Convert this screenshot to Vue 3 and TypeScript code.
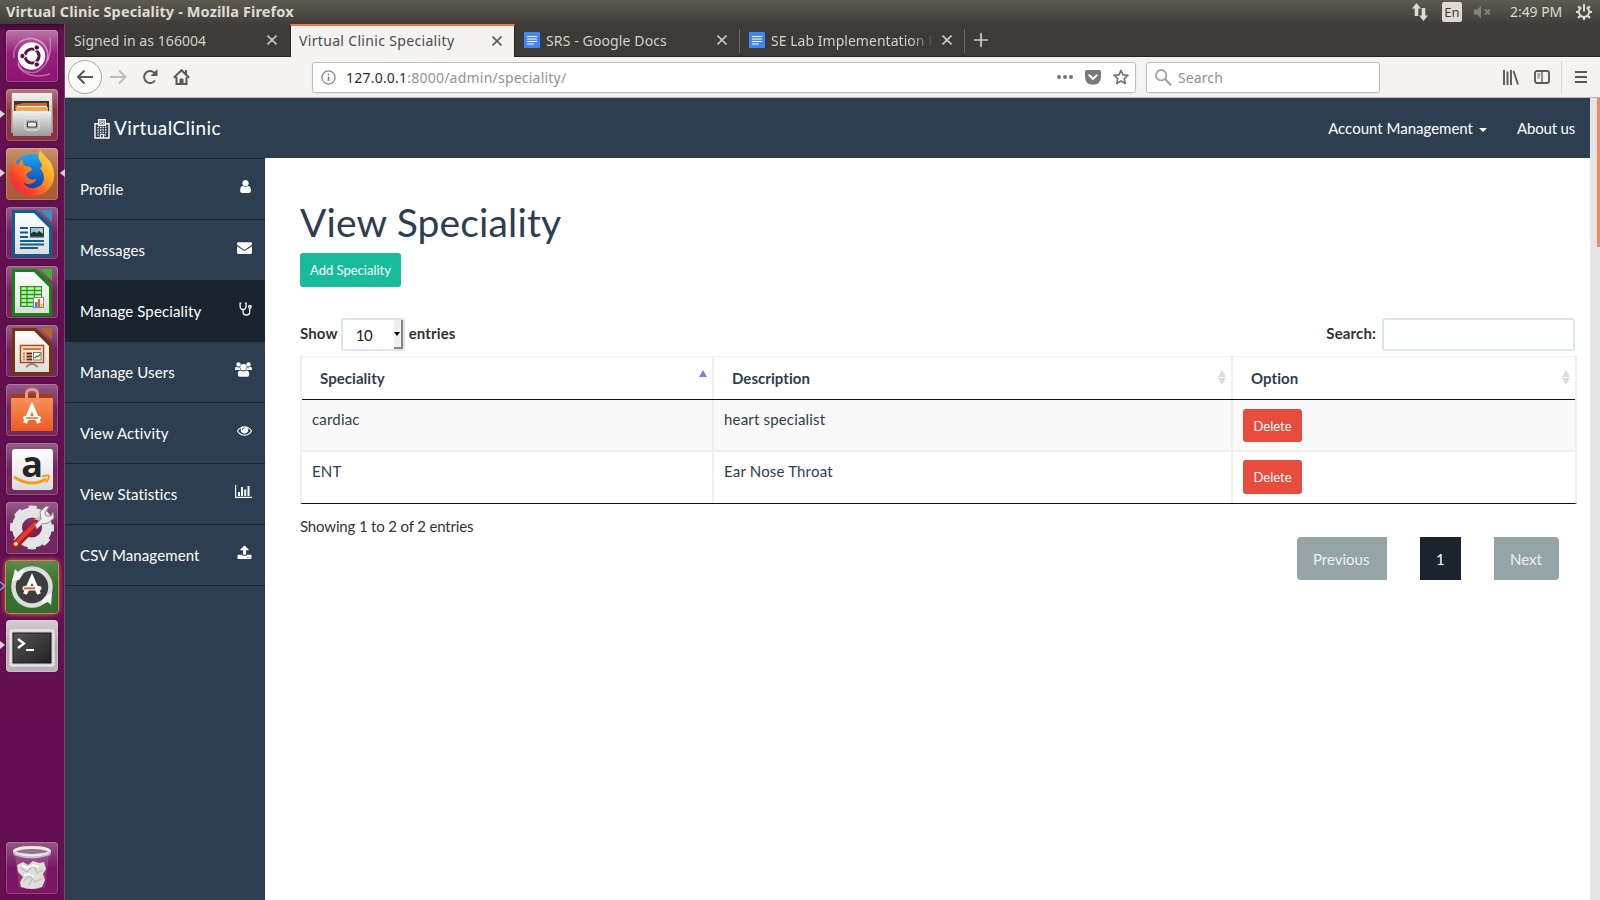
<script setup lang="ts">
import { ref } from 'vue'

interface Tab {
  title: string
  docs?: boolean
  active?: boolean
  cls: string
}
interface MenuItem {
  label: string
  icon: string
}
interface Row {
  name: string
  description: string
}

const tabs: Tab[] = [
  { title: 'Signed in as 166004', cls: 't1' },
  { title: 'Virtual Clinic Speciality', active: true, cls: 't2' },
  { title: 'SRS - Google Docs', docs: true, cls: 't3' },
  { title: 'SE Lab Implementation P', docs: true, cls: 't4' },
]

const menu: MenuItem[] = [
  { label: 'Profile', icon: 'user' },
  { label: 'Messages', icon: 'mail' },
  { label: 'Manage Speciality', icon: 'stethoscope' },
  { label: 'Manage Users', icon: 'users' },
  { label: 'View Activity', icon: 'eye' },
  { label: 'View Statistics', icon: 'chart' },
  { label: 'CSV Management', icon: 'upload' },
]
const current = ref('Manage Speciality')

const glyphs: Record<string, string> = {
  user: 'M1536 1399q0 109-62.5 187t-150.5 78h-854q-88 0-150.5-78t-62.5-187q0-85 8.5-160.5t31.5-152 58.5-131 94-89 134.5-34.5q131 128 313 128t313-128q76 0 134.5 34.5t94 89 58.5 131 31.5 152 8.5 160.5zm-256-887q0 159-112.5 271.5t-271.5 112.5-271.5-112.5-112.5-271.5 112.5-271.5 271.5-112.5 271.5 112.5 112.5 271.5z',
  mail: 'M1792 710v794q0 66-47 113t-113 47h-1472q-66 0-113-47t-47-113v-794q44 49 101 87 362 246 497 345 57 42 92.5 65.5t94.5 48 110 24.5h2q51 0 110-24.5t94.5-48 92.5-65.5q170-123 498-345 57-39 100-87zm0-294q0 79-49 151t-122 123q-376 261-468 325-10 7-42.5 31t-54 38.5-52 32.5-57.5 27-50 9h-2q-23 0-50-9t-57.5-27-52-32.5-54-38.5-42.5-31q-91-64-262-182.5t-205-142.5q-62-42-117-115.5t-55-136.5q0-78 41.5-130t118.5-52h1472q65 0 112.5 47t47.5 113z',
  eye: 'M1664 960q-152-236-381-353 61 104 61 225 0 185-131.5 316.5t-316.5 131.5-316.5-131.5-131.5-316.5q0-121 61-225-229 117-381 353 133 205 333.5 326.5t434.5 121.5 434.5-121.5 333.5-326.5zm-720-384q0-20-14-34t-34-14q-125 0-214.5 89.5t-89.5 214.5q0 20 14 34t34 14 34-14 14-34q0-86 61-147t147-61q20 0 34-14t14-34zm848 384q0 34-20 69-140 230-376.5 368.5t-499.5 138.5-499.5-139-376.5-368q-20-35-20-69t20-69q140-229 376.5-368t499.5-139 499.5 139 376.5 368q20 35 20 69z',
  upload: 'M1344 1472q0-26-19-45t-45-19-45 19-19 45 19 45 45 19 45-19 19-45zm256 0q0-26-19-45t-45-19-45 19-19 45 19 45 45 19 45-19 19-45zm128-224v320q0 40-28 68t-68 28h-1472q-40 0-68-28t-28-68v-320q0-40 28-68t68-28h427q21 56 70.5 92t110.5 36h256q61 0 110.5-36t70.5-92h427q40 0 68 28t28 68zm-325-648q-17 40-59 40h-256v448q0 26-19 45t-45 19h-256q-26 0-45-19t-19-45v-448h-256q-42 0-59-40-17-39 14-69l448-448q18-19 45-19t45 19l448 448q31 30 14 69z',
}

const rows: Row[] = [
  { name: 'cardiac', description: 'heart specialist' },
  { name: 'ENT', description: 'Ear Nose Throat' },
]
</script>

<template>
  <div class="desktop">
    <header class="panel">
      <span class="window-title">Virtual Clinic Speciality - Mozilla Firefox</span>
      <div class="indicators">
        <svg class="i-net" width="18" height="18" viewBox="0 0 18 18" fill="#dfdbd2">
          <path d="M5.5 0L10 5.5H7.3V13H3.700V5.500H1z" />
          <path d="M12.500 18L8 12.500h2.700V5h3.600v7.500H17z" />
        </svg>
        <span class="lang">En</span>
        <svg class="i-vol" width="18" height="14" viewBox="0 0 18 14" fill="#85827a">
          <path d="M0 4.500h3L7 1v12L3 9.500H0z" />
          <path d="M11 4.500l5 5M16 4.500l-5 5" stroke="#85827a" stroke-width="1.800" />
        </svg>
        <span class="clock">2:49 PM</span>
        <svg class="i-gear" width="18" height="18" viewBox="0 0 18 18" fill="none" stroke="#dfdbd2">
          <path d="M6.300 4.400a5.200 5.200 0 1 0 5.400 0" stroke-width="2" />
          <path d="M9 1v7.500" stroke-width="2" />
          <path d="M9 14v3M4 9H1M17 9h-3M5.300 12.700l-2.200 2.200M12.700 12.700l2.200 2.200M5 5L3.200 3.200M13 5l1.800-1.800" stroke-width="2.200" />
        </svg>
      </div>
    </header>

    <div class="below">
      <aside class="launcher">
        <svg class="defs" width="0" height="0">
          <defs>
            <linearGradient id="gMetal" x1="0" y1="0" x2="0" y2="1">
              <stop offset="0" stop-color="#f2f2f2" />
              <stop offset="1" stop-color="#9b9b9b" />
            </linearGradient>
            <linearGradient id="gPaper" x1="0" y1="0" x2="0" y2="1">
              <stop offset="0" stop-color="#fff" />
              <stop offset="1" stop-color="#dcdcdc" />
            </linearGradient>
            <linearGradient id="gFox" x1="1" y1="0" x2="0" y2="1">
              <stop offset="0" stop-color="#fff14a" />
              <stop offset=".4" stop-color="#ff9a1f" />
              <stop offset=".75" stop-color="#ff3b2c" />
              <stop offset="1" stop-color="#e0186a" />
            </linearGradient>
            <linearGradient id="gGlobe" x1="0" y1="0" x2="0" y2="1">
              <stop offset="0" stop-color="#1fa8f2" />
              <stop offset="1" stop-color="#0a2f9c" />
            </linearGradient>
            <linearGradient id="gBag" x1="0" y1="0" x2="0" y2="1">
              <stop offset="0" stop-color="#f59258" />
              <stop offset="1" stop-color="#ee5a20" />
            </linearGradient>
            <linearGradient id="gTerm" x1="0" y1="0" x2="1" y2="1">
              <stop offset="0" stop-color="#555" />
              <stop offset="1" stop-color="#222" />
            </linearGradient>
          </defs>
        </svg>

        <div class="tile dash">
          <svg viewBox="0 0 52 52">
            <g fill="none" stroke="#e9b6da" stroke-opacity=".5" stroke-width="1.500">
              <path d="M8 28C6 14 20 4 32 10c8 4 12 12 8 22" />
              <path d="M44 8C46 24 42 36 30 42c-8 2-16-2-18-8" />
              <path d="M14 12c12-8 30 0 28 18" />
              <path d="M12 32c2 14 18 16 32 12" />
            </g>
            <circle cx="25.500" cy="26" r="13.700" fill="#fff" />
            <circle cx="26" cy="26" r="7" fill="none" stroke="#5b1248" stroke-width="3.200" />
            <path d="M26 26l-10 0M26 26l5-9M26 26l5 9" stroke="#fff" stroke-width="1.300" />
            <circle cx="26" cy="26" r="5.400" fill="#fff" />
            <g fill="#5b1248" stroke="#fff" stroke-width="1">
              <circle cx="16.400" cy="26" r="2.700" />
              <circle cx="30.800" cy="17.500" r="2.700" />
              <circle cx="30.800" cy="34.500" r="2.700" />
            </g>
          </svg>
        </div>

        <div class="tile files">
          <i class="run"></i>
          <svg viewBox="0 0 52 52">
            <path d="M6 4h40l1 40H5z" fill="url(#gMetal)" />
            <path d="M8 12h35v12H8z" fill="#3b3631" />
            <path d="M9 16l8-2h24v9H9z" fill="#d9672b" />
            <path d="M10 18h32v5H10z" fill="#f6a45c" />
            <path d="M11 17.500h30" stroke="#fff" stroke-width="1" />
            <path d="M7 22h38v25H7z" fill="url(#gMetal)" />
            <rect x="19" y="30" width="14" height="11" rx="2" fill="#b6b6b6" stroke="#e6e6e6" />
            <rect x="21.500" y="33" width="9" height="5" rx="1" fill="#eee" stroke="#3a3a3a" stroke-width="1.200" />
          </svg>
        </div>

        <div class="tile fox">
          <i class="run"></i><i class="focus"></i>
          <svg viewBox="0 0 52 52">
            <circle cx="26" cy="26" r="20" fill="url(#gGlobe)" />
            <path d="M9 11c0 4 1 5 3 6 1-3 3-5 5-6-1 3 0 5 2 7 3 0 6 1 7 3-1 3-5 3-6 6 2 4 6 6 10 4-1 5-9 7-13 3 3 7 12 8 18 3 5-5 3-12-1-17 2-1 2-2 2-4-3-4-5-7-2-14 3 6 13 10 14 23 1 14-9 23-22 23C13 48 4 38 4 27c0-6 2-12 5-16z" fill="url(#gFox)" />
          </svg>
        </div>

        <div class="tile">
          <svg viewBox="0 0 52 52">
            <path d="M6 3h24l16 16v31H6z" fill="#0f5e91" />
            <path d="M34 3h12v12z" fill="#3a91c0" />
            <path d="M9 6h19l15 15v26H9z" fill="url(#gPaper)" />
            <path d="M14 21h8M14 25.500h8M14 30h8M14 34h24M14 37.500h24M14 41h18" stroke="#0f5e91" stroke-width="2" />
            <rect x="24.500" y="20.500" width="13" height="9.500" fill="#8cc4ea" stroke="#174a6d" />
            <path d="M25 29.500v-3l3-2 3 1.500 2-2 4 3v2.500z" fill="#24351f" />
            <circle cx="34.500" cy="23" r="1.300" fill="#ffd84d" />
          </svg>
        </div>

        <div class="tile">
          <svg viewBox="0 0 52 52">
            <path d="M6 3h24l16 16v31H6z" fill="#16850f" />
            <path d="M34 3h12v12z" fill="#3fb32f" />
            <path d="M9 6h19l15 15v26H9z" fill="url(#gPaper)" />
            <rect x="14" y="20" width="22" height="21" fill="#18a303" />
            <path d="M15.500 22.500h19.500M15.500 26.500h19.500M15.500 30.500h19.500M15.500 34.500h19.500M15.500 38.500h19.500" stroke="#c9f2c2" stroke-width="2.300" />
            <path d="M21 20v21M28.500 20v21" stroke="#18a303" stroke-width="1.200" />
            <rect x="27.500" y="31.500" width="10" height="10" fill="#fff" stroke="#888" />
            <path d="M29 36h2.500v5H29z" fill="#2a8de0" /><path d="M31.800 33h2.400v8h-2.400z" fill="#e0621d" /><path d="M34.500 37.500h2.200V41h-2.200z" fill="#f3b91d" />
          </svg>
        </div>

        <div class="tile">
          <svg viewBox="0 0 52 52">
            <path d="M6 3h24l16 16v31H6z" fill="#7d3309" />
            <path d="M34 3h12v12z" fill="#b4652c" />
            <path d="M9 6h19l15 15v26H9z" fill="url(#gPaper)" />
            <path d="M26 38l-6 4M26 38l6 4M26 36v4" stroke="#888" stroke-width="2" />
            <rect x="14.500" y="20.500" width="23" height="17" fill="#fbe9dc" stroke="#b04a13" stroke-width="1.500" />
            <path d="M17 24h18" stroke="#e0703a" stroke-width="2" />
            <path d="M17 28.500h2M17 31.500h2M17 34.500h2" stroke="#e0703a" stroke-width="1.800" />
            <path d="M20.500 28.500h5.500M20.500 31.500h5.500M20.500 34.500h5.500" stroke="#6a2504" stroke-width="1.800" />
            <rect x="27.500" y="27.500" width="7.500" height="7.500" fill="#fff" stroke="#777" />
            <path d="M28.500 33l2-2 1.500 1 2.500-3" stroke="#2aa02a" stroke-width="1.300" fill="none" />
          </svg>
        </div>

        <div class="tile">
          <svg viewBox="0 0 52 52">
            <path d="M6 10h40l1 5H5z" fill="#a33d14" />
            <path d="M5 14h42v33H5z" fill="url(#gBag)" />
            <path d="M20.500 18V9.500q0-4 5.500-4t5.500 4V18" fill="none" stroke="#f0997a" stroke-width="3" />
            <path d="M19 39l7-16.500L33 39" fill="none" stroke="#fff" stroke-width="4" />
            <rect x="17" y="32" width="18" height="4" rx="2" fill="#fff" />
            <path d="M20 34h12" stroke="#ee6a2b" stroke-width="1.500" />
          </svg>
        </div>

        <div class="tile">
          <svg viewBox="0 0 52 52">
            <rect x="6" y="6" width="41" height="41" rx="3" fill="url(#gPaper)" />
            <text x="26" y="33.500" text-anchor="middle" class="amz">a</text>
            <path d="M8 34q17 11 32 2" fill="none" stroke="#f79a1c" stroke-width="3" />
            <path d="M36 33.500q7-2 7 0t-3 6" fill="none" stroke="#f79a1c" stroke-width="2" />
          </svg>
        </div>

        <div class="tile">
          <svg viewBox="0 0 52 52">
            <circle cx="26" cy="25.500" r="15" fill="none" stroke="#e4e4e4" stroke-width="10" />
            <circle cx="26" cy="25.500" r="19.500" fill="none" stroke="#e4e4e4" stroke-width="5" stroke-dasharray="7.800 7.520" stroke-dashoffset="3.900" />
            <path d="M30 20l9-7" stroke="#c5c5c5" stroke-width="6" />
            <path d="M9 43l21-21" stroke="#b0161c" stroke-width="8" stroke-linecap="round" />
            <path d="M9 42l20-20" stroke="#e03a35" stroke-width="4.500" stroke-linecap="round" />
            <path d="M29 23l6-6-1-7 6-6 3 1-4 5 1 4 5 0 2-4 1 6-6 5-6 1-5 5z" fill="#eee" stroke="#909090" />
            <circle cx="10" cy="42" r="1.800" fill="#fff" />
          </svg>
        </div>

        <div class="tile updater">
          <svg class="outline" viewBox="0 0 6 10"><path d="M0 1l5 4-5 4" fill="none" stroke="#7fb0dc" stroke-width="1.300" /></svg>
          <svg viewBox="0 0 52 52">
            <circle cx="26" cy="26" r="18.500" fill="#3d3d3c" stroke="#dcdcdc" stroke-width="4.500" />
            <path d="M6 20l3-12 3 3 6-3-1 5-4 6z" fill="#f3f3f3" />
            <path d="M46 32l-1 12-3-3-6 2 1-5 3-3z" fill="#f3f3f3" />
            <path d="M19 33l7-16 7 16" fill="none" stroke="#fff" stroke-width="4" />
            <rect x="16.500" y="25" width="19" height="4.500" rx="2" fill="#fff" />
            <path d="M18 27.300h11" stroke="#ee5a20" stroke-width="2" />
          </svg>
        </div>

        <div class="tile term">
          <i class="run"></i>
          <svg viewBox="0 0 52 52">
            <rect x="4" y="10" width="44" height="36" rx="1.500" fill="#d6d6d6" stroke="#f3f3f3" />
            <rect x="7" y="13" width="38" height="30" fill="url(#gTerm)" stroke="#191919" />
            <path d="M12 19l6 4.500-6 4.500" fill="none" stroke="#fff" stroke-width="2.200" />
            <path d="M20 30h8" stroke="#fff" stroke-width="2" />
          </svg>
        </div>

        <div class="tile trash">
          <svg viewBox="0 0 52 52">
            <path d="M9 12l4 33q13 5 26 0l4-33z" fill="#fff" fill-opacity=".14" />
            <path d="M11 23l6-3 5 3 5-4 6 2 5-1 2 7-3 5 2 6-3 7q-10 4-21 0l-1-5 3-5-5-5z" fill="#dcdcd8" />
            <path d="M14 26l7 4 5-5M28 24l3 7 6-3M17 39l7-5 5 6 8-4M23 43l3-6" stroke="#bdbcb7" fill="none" stroke-width="1.200" />
            <path d="M16 23l5 3 6-3 6 2M18 33l5-1 5 3" stroke="#fff" fill="none" stroke-width="1.600" />
            <ellipse cx="26" cy="9.500" rx="17.500" ry="4" fill="#9c6f91" stroke="#e8e8e8" stroke-width="3" />
            <path d="M8.500 10v2.500q17 6 35 0V10" fill="none" stroke="#bdbdbd" stroke-width="1.800" />
          </svg>
        </div>
      </aside>

      <div class="browser">
        <div class="tabstrip">
          <div v-for="t in tabs" :key="t.title" class="tab" :class="[t.cls, { active: t.active }]">
            <svg v-if="t.docs" class="docs" width="16" height="16" viewBox="0 0 16 16">
              <rect width="16" height="16" rx="1" fill="#4285f4" />
              <path d="M3 4.500h10M3 7h10M3 9.500h10M3 12h7" stroke="#fff" stroke-width="1.200" />
            </svg>
            <span class="tab-title">{{ t.title }}</span>
            <svg class="close" width="10" height="10" viewBox="0 0 10 10" fill="none" stroke="currentColor" stroke-width="1.600">
              <path d="M.5.5l9 9M9.500.5l-9 9" />
            </svg>
          </div>
          <svg class="plus" width="14" height="14" viewBox="0 0 14 14" stroke="#d0ccc4" stroke-width="1.700"><path d="M7 0v14M0 7h14" /></svg>
        </div>

        <div class="toolbar">
          <span class="back">
            <svg width="18" height="16" viewBox="0 0 18 16" fill="none" stroke="#5a5955" stroke-width="2"><path d="M17 8H2M8.500 1.500L2 8l6.500 6.500" /></svg>
          </span>
          <svg class="fwd" width="17" height="16" viewBox="0 0 17 16" fill="none" stroke="#bdbcba" stroke-width="2"><path d="M0 8h15M9 1.500L15.500 8 9 14.500" /></svg>
          <svg class="reload" width="16" height="16" viewBox="0 0 16 16" fill="none" stroke="#5a5955" stroke-width="2"><path d="M13 11.500A6 6 0 1 1 13 4.500" /><path d="M15.500 0v7H8.500z" fill="#5a5955" stroke="none" /></svg>
          <svg class="home" width="17" height="16" viewBox="0 0 17 16" fill="none" stroke="#5a5955" stroke-width="2"><path d="M.8 8.700L8.500 1.200l7.700 7.500M3.500 8v7h10V8" /><path d="M7 15v-5h3v5z" fill="#5a5955" stroke-width="1" /><path d="M13 1v4" /></svg>

          <div class="urlbar">
            <svg class="info" width="15" height="15" viewBox="0 0 15 15" fill="none" stroke="#82817e"><circle cx="7.500" cy="7.500" r="6.600" stroke-width="1.200" /><path d="M7.500 6.500V11M7.500 3.700v1.600" stroke-width="1.600" /></svg>
            <span class="url"><b>127.0.0.1</b>:8000/admin/speciality/</span>
            <svg class="dots" width="16" height="4" viewBox="0 0 16 4" fill="#777673"><circle cx="2" cy="2" r="2" /><circle cx="8" cy="2" r="2" /><circle cx="14" cy="2" r="2" /></svg>
            <svg class="pocket" width="16" height="15" viewBox="0 0 16 15"><path d="M1.500 0h13q1.500 0 1.500 1.500V6.500q0 8-8 8.300Q0 14.500 0 6.500V1.500Q0 0 1.500 0z" fill="#7b7a77" /><path d="M4.300 5.300L8 8.800l3.700-3.500" fill="none" stroke="#fff" stroke-width="2" stroke-linecap="round" /></svg>
            <svg class="star" width="16" height="16" viewBox="0 0 16 16"><path d="M8 1.300l2 4.500 4.900.5-3.700 3.300 1.100 4.900L8 12l-4.300 2.500 1.100-4.900L1.100 6.300 6 5.800z" fill="none" stroke="#777673" stroke-width="1.700" stroke-linejoin="round" /></svg>
          </div>

          <div class="searchbar">
            <svg width="17" height="17" viewBox="0 0 17 17" fill="none" stroke="#a3a2a0" stroke-width="1.800"><circle cx="6.200" cy="6.200" r="5.200" /><path d="M10 10l6 6.200" stroke-width="2.200" /></svg>
            <span>Search</span>
          </div>

          <svg class="library" width="16" height="15" viewBox="0 0 16 15" stroke="#5a5955" stroke-width="1.900"><path d="M1 0v15M4.500 1.500V15M8 0v15M10.500 1l4.500 13.500" /></svg>
          <svg class="sideicon" width="16" height="14" viewBox="0 0 16 14" fill="none" stroke="#5a5955"><rect x="1" y="1" width="14" height="12" rx="2" stroke-width="1.900" /><path d="M8 1v12" stroke-width="1.300" /><path d="M3.500 4h2.700M3.500 6h2.700M3.500 8h2" stroke-width="1" /></svg>
          <i class="sep"></i>
          <svg class="burger" width="12" height="14" viewBox="0 0 12 14" stroke="#5a5955" stroke-width="2"><path d="M0 2h12M0 7h12M0 12h12" /></svg>
        </div>

        <div class="viewport">
          <div class="page">
            <nav class="navbar">
              <svg class="hospital" width="16" height="20" viewBox="0 0 16 20" fill="none" stroke="#fff">
                <path d="M4.500 4.700H1v14.300h14V4.700h-3.500" stroke-width="1.400" />
                <path d="M4.700.7h6.600v5.600H4.700z" stroke-width="1.400" />
                <path d="M6.800 1.800v3.400M9.200 1.800v3.400M6.800 3.500h2.400" stroke-width="1" />
                <path d="M3.500 8.500h9M3.500 11h9M3.500 13.500h9M3.500 16h2M10.500 16h2" stroke-width="1.300" stroke-dasharray="1.300 1.200" />
                <path d="M6.500 19v-3.500h3V19" stroke-width="1.200" />
              </svg>
              <span class="brand">VirtualClinic</span>
              <span class="account">Account Management</span><i class="caret"></i>
              <span class="about">About us</span>
            </nav>
            <div class="body">
              <ul class="side">
                <li v-for="m in menu" :key="m.label" :class="{ on: m.label === current }" @click="current = m.label">
                  <span>{{ m.label }}</span>
                  <svg v-if="glyphs[m.icon]" class="fa" :class="m.icon" width="15" height="15" viewBox="0 0 1792 1792" fill="#fff"><path :d="glyphs[m.icon]" /></svg>
                  <svg v-else-if="m.icon === 'stethoscope'" class="fa" width="13" height="14" viewBox="0 0 13 14" fill="none" stroke="#fff" stroke-width="1.300">
                    <path d="M2.300 1.200H1.100V4q0 3.500 3 3.500t3-3.500V1.200H5.900M4.100 7.500V10q0 3 3.300 3t3.300-3V6" />
                    <circle cx="10.900" cy="4.800" r="1.300" />
                  </svg>
                  <svg v-else-if="m.icon === 'users'" class="fa" width="17" height="15" viewBox="0 0 17 15" fill="#fff">
                    <circle cx="3.500" cy="2.400" r="2.200" /><circle cx="13.500" cy="2.400" r="2.200" />
                    <path d="M0 7.500q0-2.500 1.200-2.700Q3.500 6 4.700 5.200q0 1.700 1 2.800H2Q0 8.300 0 7.500zM17 7.500q0-2.500-1.200-2.700-2.300 1.200-3.500.4 0 1.700-1 2.800H15q2 .3 2-.5z" />
                    <circle cx="8.500" cy="5.300" r="3.200" />
                    <path d="M2.800 12.500q0-4 2.700-4 3 2 6 0 2.700 0 2.700 4 0 2.300-2 2.300H4.800q-2 0-2-2.300z" />
                  </svg>
                  <svg v-else class="fa" width="17" height="13" viewBox="0 0 17 13" fill="#fff">
                    <path d="M0 0h1.200v11.800H17V13H0zM3 7h2v4H3zM6 2h2v9H6zM9.200 4.500h2V11h-2zM12.500 1h2v10h-2z" />
                  </svg>
                </li>
              </ul>

              <main class="content">
                <h1>View Speciality</h1>
                <button class="btn add">Add Speciality</button>
                <div class="controls">
                  <label>Show</label>
                  <div class="select"><span>10</span><i class="knob"><b></b></i></div>
                  <label>entries</label>
                  <label class="find">Search:</label>
                  <input type="text" />
                </div>
                <div class="grid">
                  <div class="row head">
                    <div class="cell"><span>Speciality</span><i class="sort asc"></i></div>
                    <div class="cell"><span>Description</span><i class="sort both"></i></div>
                    <div class="cell"><span>Option</span><i class="sort both"></i></div>
                  </div>
                  <div v-for="r in rows" :key="r.name" class="row data">
                    <div class="cell">{{ r.name }}</div>
                    <div class="cell">{{ r.description }}</div>
                    <div class="cell act"><button class="btn del">Delete</button></div>
                  </div>
                </div>
                <div class="foot">
                  <span class="showing">Showing 1 to 2 of 2 entries</span>
                  <div class="pager">
                    <span class="prev">Previous</span>
                    <span class="num">1</span>
                    <span class="next">Next</span>
                  </div>
                </div>
              </main>
            </div>
          </div>
          <div class="scroll"><i></i></div>
        </div>
      </div>
    </div>
  </div>
</template>

<style>
html, body { margin: 0; overflow: hidden; }
</style>

<style scoped>
* { box-sizing: border-box; }
svg { display: block; flex: none; }
i { font-style: normal; }
.desktop { width: 1600px; height: 900px; display: flex; flex-direction: column; overflow: hidden; font-family: "Noto Sans", "Open Sans", sans-serif; }
.panel { height: 24px; flex: none; display: flex; align-items: center; justify-content: space-between; padding: 0 7px 0 6px; background: linear-gradient(#5e5b50, #3f3e3a); color: #dfdbd2; }
.window-title { font-size: 14.5px; font-weight: 700; line-height: 20px; margin-bottom: 2px; letter-spacing: .12px; white-space: nowrap; }
.indicators { display: flex; align-items: center; }
.lang { width: 20px; height: 20px; margin-left: 13px; border-radius: 2px; background: #dfdbd2; color: #3f3e3a; font-size: 13px; line-height: 21px; text-align: center; }
.i-vol { margin-left: 12px; }
.clock { width: 54px; margin-left: 18px; font-size: 14px; line-height: 22px; letter-spacing: -.05px; white-space: nowrap; }
.i-gear { margin-left: 11px; }

.below { flex: 1; display: flex; min-height: 0; }
.launcher { width: 65px; flex: none; display: flex; flex-direction: column; gap: 7px; padding: 6px 0 6px 6px; background: linear-gradient(#3d0a33 0, #64104f 8px, #651052 100%); border-right: 1px solid #84407a; }
.defs { position: absolute; }
.tile { position: relative; width: 52px; height: 52px; flex: none; border-radius: 4px; background: linear-gradient(rgba(255,255,255,.32), rgba(255,255,255,.08) 50%, rgba(255,255,255,.1)); box-shadow: inset 0 0 0 1px rgba(255,255,255,.2), 0 0 3px rgba(0,0,0,.25); }
.tile svg { width: 52px; height: 52px; }
.dash { background: linear-gradient(#b978a6, #971f7c 45%, #8e1474); }
.files { background: linear-gradient(#b4777a, #8c3540 40%, #8a3440); }
.fox { background: linear-gradient(#c79473, #b06a42 45%, #a85a36); }
.updater { background: linear-gradient(#5c8a4e, #33702e 50%, #356f30); box-shadow: 0 0 0 1px #e07b4a, 0 0 5px 1px #d07850; }
.term { background: linear-gradient(#d4cbd2, #b8a8b5 50%, #bdb0bb); }
.trash { margin-top: auto; background: linear-gradient(rgba(255,255,255,.3), rgba(160,30,130,.35) 50%, rgba(160,30,130,.4)); }
.amz { font: 700 36px "Open Sans", sans-serif; fill: #242424; }
.run { position: absolute; left: -6px; top: 21px; border-left: 5px solid #d9d3d8; border-top: 4.5px solid transparent; border-bottom: 4.5px solid transparent; }
.tile .outline { position: absolute; left: -6px; top: 20px; width: 6px; height: 10px; }
.focus { position: absolute; right: -7px; top: 21px; border-right: 5px solid #d9d3d8; border-top: 4.5px solid transparent; border-bottom: 4.5px solid transparent; }

.browser { flex: 1; display: flex; flex-direction: column; min-width: 0; }
.tabstrip { height: 33px; flex: none; display: flex; align-items: stretch; background: #3c3b37; border-bottom: 1px solid #262522; }
.tab { width: 225px; display: flex; align-items: center; padding: 0 13px 0 9px; color: #d5d1c8; font-size: 14px; }
.tab.active { height: 33px; background: #f4f3f1; color: #4c4b48; border-top: 2px solid #f0784a; border-left: 1px solid #262522; border-right: 1px solid #262522; padding: 0 12px 2px 8px; }
.tab-title { flex: 1; overflow: hidden; white-space: nowrap; }
.t3, .t4 { position: relative; }
.t3::after, .t4::after { content: ""; position: absolute; right: 0; top: 5px; width: 1px; height: 24px; background: #67665f; }
.t1 .tab-title { letter-spacing: .07px; }
.t2 .tab-title { letter-spacing: .33px; }
.t3 .tab-title { letter-spacing: .12px; }
.t4 .tab-title { letter-spacing: .03px; margin-right: 8px; -webkit-mask-image: linear-gradient(90deg, #000 85%, transparent 100%); mask-image: linear-gradient(90deg, #000 85%, transparent 100%); }
.docs { margin-right: 6px; }
.close { color: #cdc9c0; }
.active .close { color: #5a5955; }
.plus { align-self: center; margin-left: 9px; }

.toolbar { height: 41px; flex: none; display: flex; align-items: center; padding-left: 3px; background: #f4f3f1; border-bottom: 1px solid #b9b7b3; }
.back { width: 34px; height: 34px; border: 1px solid #a9a7a3; border-radius: 50%; background: #fcfcfb; display: flex; align-items: center; justify-content: center; }
.fwd { margin-left: 8px; }
.reload { margin-left: 15px; }
.home { margin-left: 15px; }
.urlbar { width: 824px; height: 31px; margin-left: 122px; display: flex; align-items: center; border: 1px solid #bfbdb9; border-radius: 3px; background: #fff; padding: 0 6px 0 8px; box-shadow: 0 1px 2px rgba(0,0,0,.06); }
.url { flex: 1; margin-left: 10px; font-size: 14px; letter-spacing: .22px; color: #94928e; white-space: nowrap; }
.url b { font-weight: 400; color: #2e2d2b; }
.pocket { margin-left: 12px; }
.star { margin-left: 12px; }
.searchbar { width: 234px; height: 31px; margin-left: 10px; display: flex; align-items: center; border: 1px solid #bfbdb9; border-radius: 3px; background: #fff; padding-left: 8px; color: #92908c; font-size: 14px; letter-spacing: .1px; box-shadow: 0 1px 2px rgba(0,0,0,.06); }
.searchbar span { margin-left: 6px; }
.library { margin-left: 123px; }
.sideicon { margin-left: 15px; }
.sep { width: 1px; height: 33px; margin-left: 11px; background: #d8d6d2; }
.burger { margin-left: 13px; }

.viewport { flex: 1; display: flex; min-height: 0; }
.page { flex: 1; display: flex; flex-direction: column; background: #fff; font-family: Lato, sans-serif; font-size: 15px; color: #2c3e50; }
.scroll { width: 10px; background: #e5e5e5; display: flex; justify-content: flex-end; }
.scroll i { width: 3px; height: 149px; background: #ef8a63; }
.navbar { height: 60px; flex: none; display: flex; align-items: center; background: #2c3e50; color: #fff; padding: 0 15px 0 29px; }
.brand { margin-left: 4px; font-size: 19px; line-height: 20px; letter-spacing: .42px; white-space: nowrap; flex: 1; }
.hospital { margin-top: 1px; }
.caret { margin: 3px 30px 0 6px; border-top: 4px solid #fff; border-left: 4px solid transparent; border-right: 4px solid transparent; }
.account, .about { white-space: nowrap; padding-bottom: 1px; }
.about { letter-spacing: -.18px; }
.body { flex: 1; display: flex; }
.side { width: 200px; flex: none; margin: 0; padding: 0; list-style: none; background: #2c3e50; border-top: 1px solid #1a242f; color: #fff; }
.side li { height: 61px; display: flex; align-items: center; justify-content: space-between; padding: 0 13px 0 15px; border-bottom: 1px solid #1a242f; cursor: pointer; }
.side li span { white-space: nowrap; letter-spacing: .12px; }
.side li.on { background: #1a242f; }
.fa { margin-bottom: 5px; }
.fa.user { margin-right: -1px; }

.content { flex: 1; display: flex; flex-direction: column; padding: 43px 13px 0 35px; }
h1 { margin: 0; font-size: 39px; line-height: 43px; font-weight: 400; letter-spacing: .14px; }
.btn { display: block; border: 0; border-radius: 3px; padding: 0; color: #fff; font: 13px Lato, sans-serif; }
.add { width: 101px; height: 34px; margin-top: 9px; background: #18bc9c; }
.controls { height: 33px; margin-top: 31px; display: flex; align-items: center; color: #333; font-weight: 700; letter-spacing: .13px; padding-right: 2px; }
.select { width: 64px; height: 33px; margin: 0 4px 0 3px; border: 2px solid #dce4ec; border-radius: 3px; display: flex; align-items: center; justify-content: space-between; padding-left: 13px; font-weight: 400; letter-spacing: -.3px; }
.select span { color: #222; }
.knob { width: 9px; height: 29px; background: #efefef; border-right: 2px solid #858585; border-bottom: 2px solid #858585; display: flex; align-items: center; justify-content: center; }
.knob b { border-top: 4px solid #000; border-left: 3.5px solid transparent; border-right: 3.5px solid transparent; }
.find { margin-left: auto; }
input { width: 193px; height: 33px; margin-left: 6px; border: 2px solid #dce4ec; border-radius: 3px; background: #fff; }
.controls label { position: relative; top: -2px; }

.grid { margin-top: 5px; border-top: 1px solid #ecf0f1; border-left: 2px solid #ecf0f1; border-right: 2px solid #ecf0f1; border-bottom: 1px solid #111; }
.row { display: grid; grid-template-columns: 412px 519px 1fr; }
.cell { border-right: 2px solid #ecf0f1; }
.cell:last-child { border-right: 0; }
.head { height: 43px; border-bottom: 1px solid #111; font-weight: 700; letter-spacing: .05px; }
.head .cell { display: flex; justify-content: space-between; padding: 12px 5px 0 18px; }
.sort { display: flex; flex-direction: column; gap: 1px; margin-top: 1px; }
.sort::before { content: ""; border-left: 4.5px solid transparent; border-right: 4.5px solid transparent; border-bottom: 7px solid #ddd; }
.sort.asc::before { border-bottom-color: #7c7ce0; }
.sort.both::after { content: ""; border-left: 4.5px solid transparent; border-right: 4.5px solid transparent; border-top: 7px solid #ddd; }
.data { height: 52px; line-height: 22px; letter-spacing: .18px; }
.data .cell { padding: 8px 10px 0; }
.data .act { padding-top: 9px; }
.data:nth-child(2) { background: #f9f9f9; border-bottom: 2px solid #ecf0f1; }
.data:nth-child(3) { height: 51px; }
.data:nth-child(3) .act { padding-top: 8px; }
.data:nth-child(2) .del { height: 33px; }
.del { width: 59px; height: 34px; background: #e74c3c; }
.foot { display: flex; justify-content: space-between; color: #333; line-height: 20px; padding: 12px 18px 0 0; }
.showing { letter-spacing: -.16px; }
.pager { display: flex; gap: 33px; margin-top: 21px; }
.pager span { height: 43px; line-height: 45px; padding: 0 16px; background: #95a5a6; color: #ecf0f1; }
.pager .prev { width: 90px; border-radius: 4px 0 0 4px; }
.pager .num { width: 41px; background: #1a242f; color: #fff; }
.pager .next { width: 65px; border-radius: 0 4px 4px 0; }
</style>
